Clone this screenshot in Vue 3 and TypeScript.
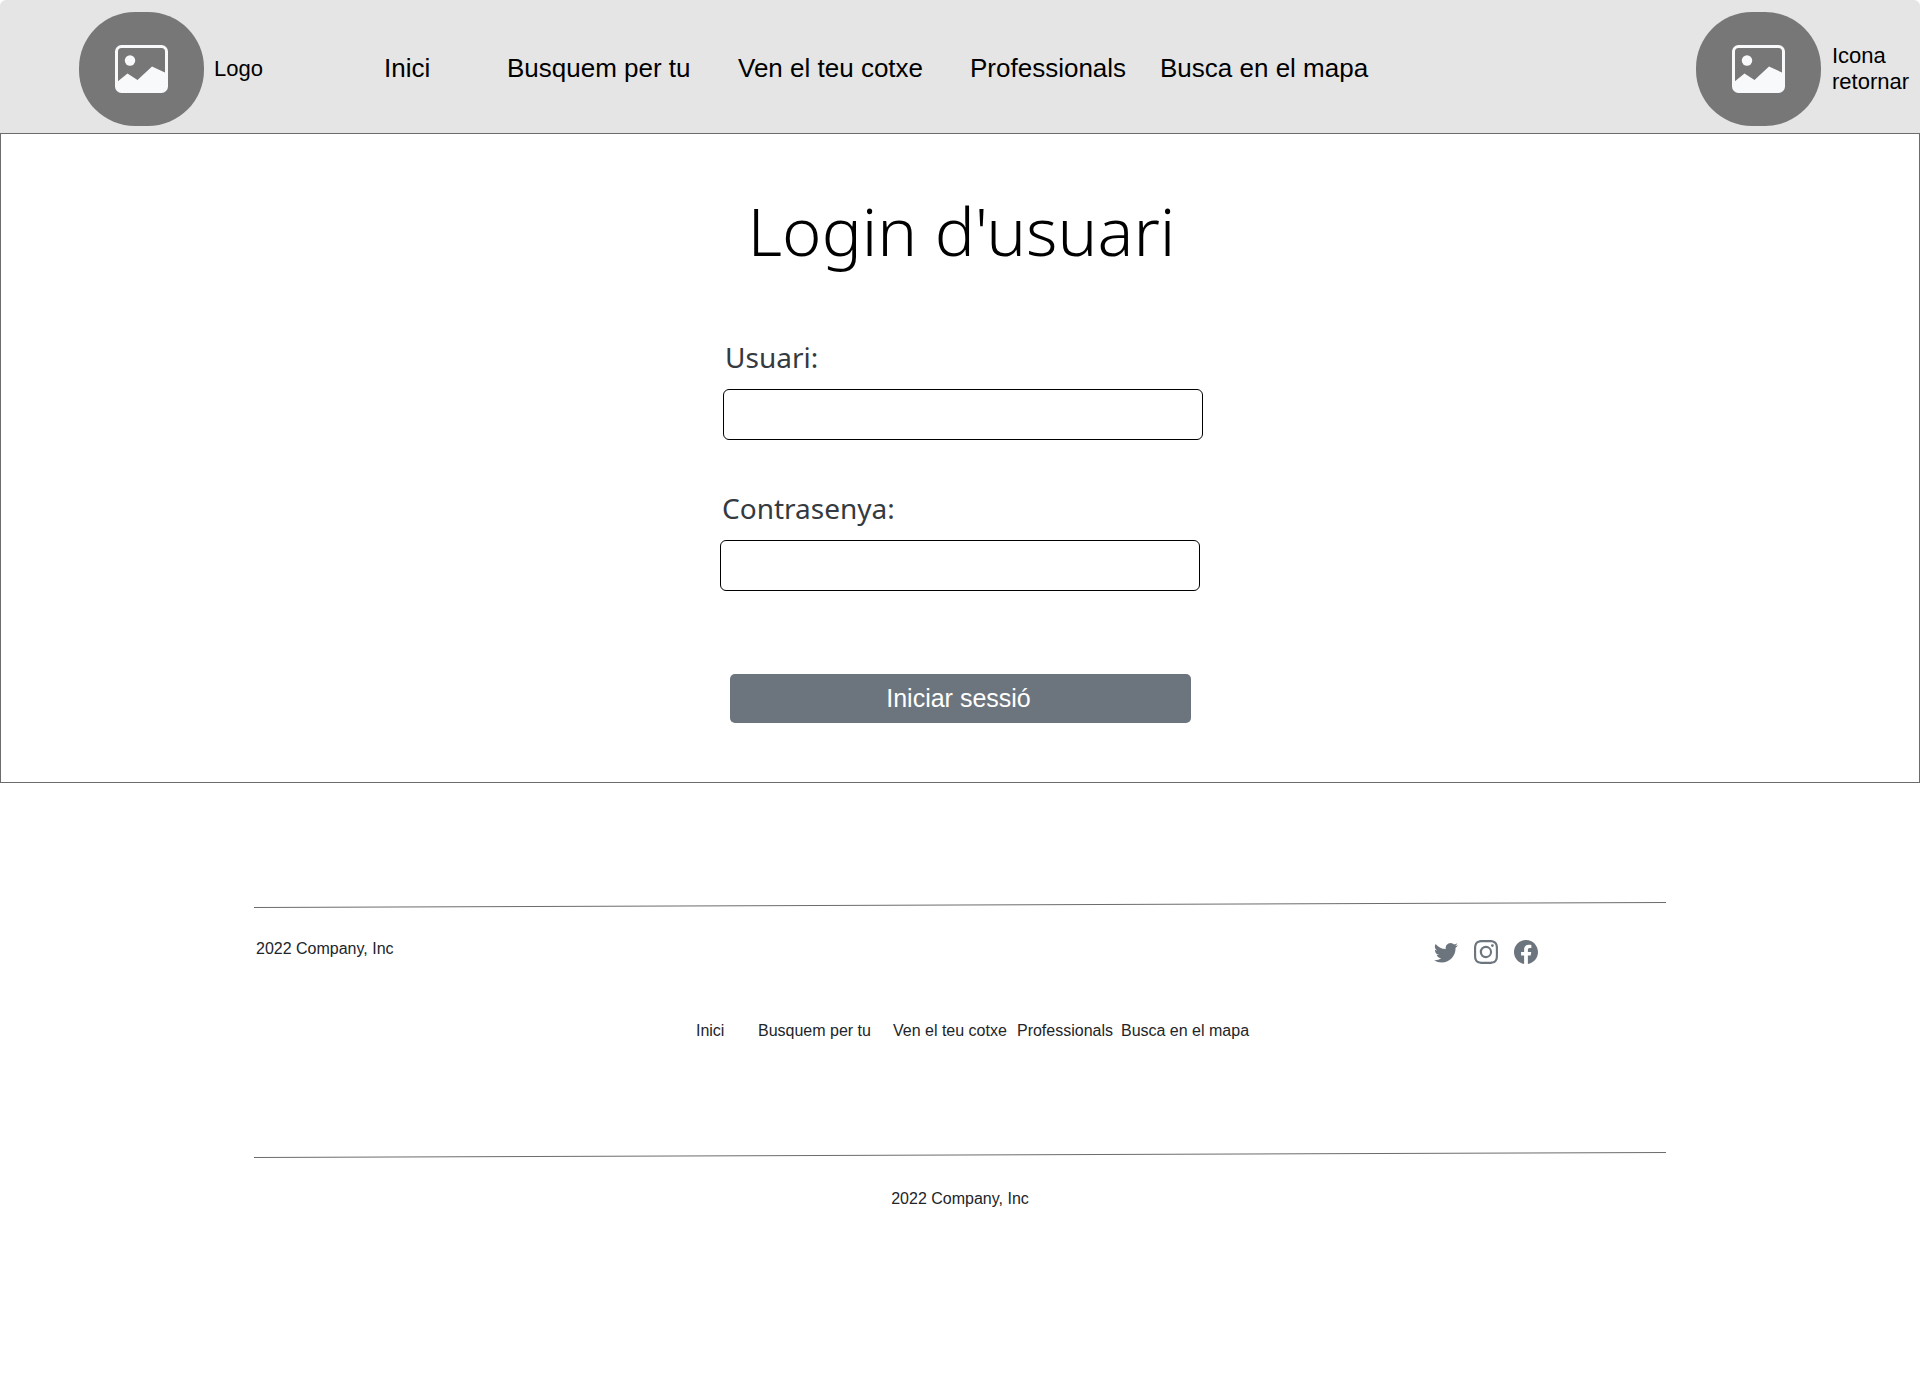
<script setup lang="ts">
import { ref } from 'vue'

const sections: string[] = [
  'Inici',
  'Busquem per tu',
  'Ven el teu cotxe',
  'Professionals',
  'Busca en el mapa',
]

const user = ref('')
const password = ref('')
</script>

<template>
  <div class="page">
    <header class="topbar">
      <a class="brand" href="#">
        <span class="badge">
          <svg viewBox="0 0 53 48" aria-hidden="true">
            <rect x="1.500" y="1.500" width="50" height="45" rx="5" fill="none" stroke="#f8f9fa" stroke-width="3" />
            <circle cx="15" cy="15.500" r="5.200" fill="#f8f9fa" />
            <path d="M2 37 12.500 28.500 22.500 35 37 21.500 51 28V42a5 5 0 0 1-5 5H7a5 5 0 0 1-5-5Z" fill="#f8f9fa" />
          </svg>
        </span>
        <span>Logo</span>
      </a>
      <nav class="main-nav" aria-label="Principal">
        <a v-for="s in sections" :key="s" href="#">{{ s }}</a>
      </nav>
      <a class="brand back" href="#">
        <span class="badge">
          <svg viewBox="0 0 53 48" aria-hidden="true">
            <rect x="1.500" y="1.500" width="50" height="45" rx="5" fill="none" stroke="#f8f9fa" stroke-width="3" />
            <circle cx="15" cy="15.500" r="5.200" fill="#f8f9fa" />
            <path d="M2 37 12.500 28.500 22.500 35 37 21.500 51 28V42a5 5 0 0 1-5 5H7a5 5 0 0 1-5-5Z" fill="#f8f9fa" />
          </svg>
        </span>
        <span class="back-text">Icona retornar</span>
      </a>
    </header>

    <main class="panel">
      <h1>Login d'usuari</h1>
      <form class="login" @submit.prevent>
        <div class="field field-user">
          <label for="user">Usuari:</label>
          <input id="user" v-model="user" type="text" autocomplete="username" />
        </div>
        <div class="field">
          <label for="password">Contrasenya:</label>
          <input id="password" v-model="password" type="password" autocomplete="current-password" />
        </div>
        <button type="submit">Iniciar sessió</button>
      </form>
    </main>

    <footer class="footer">
      <svg class="rule" viewBox="0 0 1412 6" preserveAspectRatio="none" aria-hidden="true">
        <path d="M0 5.500 1412 .5" stroke="#6c6c6c" fill="none" />
      </svg>
      <div class="footer-top">
        <span>2022 Company, Inc</span>
        <div class="social">
          <a href="#" aria-label="Twitter">
            <svg viewBox="0 0 16 16"><path d="M5.026 15c6.038 0 9.341-5.003 9.341-9.334 0-.14 0-.282-.006-.422A6.685 6.685 0 0 0 16 3.542a6.658 6.658 0 0 1-1.889.518 3.301 3.301 0 0 0 1.447-1.817 6.533 6.533 0 0 1-2.087.793A3.286 3.286 0 0 0 7.875 6.030a9.325 9.325 0 0 1-6.767-3.429 3.289 3.289 0 0 0 1.018 4.382A3.323 3.323 0 0 1 .64 6.575v.045a3.288 3.288 0 0 0 2.632 3.218 3.203 3.203 0 0 1-.865.115 3.230 3.230 0 0 1-.614-.057 3.283 3.283 0 0 0 3.067 2.277A6.588 6.588 0 0 1 .78 13.580a6.320 6.320 0 0 1-.78-.045A9.344 9.344 0 0 0 5.026 15z" /></svg>
          </a>
          <a href="#" aria-label="Instagram">
            <svg viewBox="0 0 16 16"><path d="M8 0C5.829 0 5.556.01 4.703.048 3.850.088 3.269.222 2.760.42a3.917 3.917 0 0 0-1.417.923A3.927 3.927 0 0 0 .42 2.760C.222 3.268.087 3.850.048 4.700.01 5.555 0 5.827 0 8.001c0 2.172.01 2.444.048 3.297.04.852.174 1.433.372 1.942.205.526.478.972.923 1.417.444.445.89.719 1.416.923.51.198 1.090.333 1.942.372C5.555 15.990 5.827 16 8 16s2.444-.01 3.298-.048c.851-.04 1.434-.174 1.943-.372a3.916 3.916 0 0 0 1.416-.923c.445-.445.718-.891.923-1.417.197-.509.332-1.090.372-1.942C15.990 10.445 16 10.173 16 8s-.01-2.445-.048-3.299c-.04-.851-.175-1.433-.372-1.941a3.926 3.926 0 0 0-.923-1.417A3.911 3.911 0 0 0 13.240.42c-.51-.198-1.092-.333-1.943-.372C10.443.01 10.172 0 7.998 0h.003zm-.717 1.442h.718c2.136 0 2.389.007 3.232.046.78.035 1.204.166 1.486.275.373.145.64.319.92.599.28.28.453.546.598.92.11.281.24.705.275 1.485.039.843.047 1.096.047 3.231s-.008 2.389-.047 3.232c-.035.78-.166 1.203-.275 1.485a2.470 2.470 0 0 1-.599.919c-.28.28-.546.453-.92.598-.28.11-.704.24-1.485.276-.843.038-1.096.047-3.232.047s-2.390-.009-3.233-.047c-.78-.036-1.203-.166-1.485-.276a2.478 2.478 0 0 1-.92-.598 2.480 2.480 0 0 1-.6-.92c-.109-.281-.24-.705-.275-1.485-.038-.843-.046-1.096-.046-3.233 0-2.136.008-2.388.046-3.231.036-.78.166-1.204.276-1.486.145-.373.319-.64.599-.92.28-.28.546-.453.92-.598.282-.11.705-.24 1.485-.276.738-.034 1.024-.044 2.515-.045v.002zm4.988 1.328a.96.96 0 1 0 0 1.920.96.96 0 0 0 0-1.920zm-4.270 1.122a4.109 4.109 0 1 0 0 8.217 4.109 4.109 0 0 0 0-8.217zm0 1.441a2.667 2.667 0 1 1 0 5.334 2.667 2.667 0 0 1 0-5.334z" /></svg>
          </a>
          <a href="#" aria-label="Facebook">
            <svg viewBox="0 0 16 16"><path d="M16 8.049c0-4.446-3.582-8.050-8-8.050C3.580 0-.002 3.603-.002 8.050c0 4.017 2.926 7.347 6.750 7.951v-5.625h-2.030V8.050H6.750V6.275c0-2.017 1.195-3.131 3.022-3.131.876 0 1.791.157 1.791.157v1.980h-1.009c-.993 0-1.303.621-1.303 1.258v1.510h2.218l-.354 2.326H9.250V16c3.824-.604 6.750-3.934 6.750-7.951z" /></svg>
          </a>
        </div>
      </div>
      <nav class="footer-nav" aria-label="Peu de pàgina">
        <a v-for="s in sections" :key="s" href="#">{{ s }}</a>
      </nav>
      <svg class="rule" viewBox="0 0 1412 6" preserveAspectRatio="none" aria-hidden="true">
        <path d="M0 5.500 1412 .5" stroke="#6c6c6c" fill="none" />
      </svg>
      <p class="copyright">2022 Company, Inc</p>
    </footer>
  </div>
</template>

<style>
body {
  margin: 0;
  background: #fff;
}
</style>

<style scoped>
.page {
  font-family: "Liberation Sans", Arial, sans-serif;
  color: #212529;
}

a {
  color: inherit;
  text-decoration: none;
}

.topbar {
  display: flex;
  align-items: center;
  padding: 12px 7px 7px 79px;
  border-radius: 6px 6px 0 0;
  background: #e5e5e5;
  color: #000;
  white-space: nowrap;
}

.brand {
  display: flex;
  align-items: center;
  gap: 10px;
  width: 305px;
  font-size: 22px;
  line-height: 26px;
}

.badge {
  display: flex;
  flex: none;
  align-items: center;
  justify-content: center;
  width: 125px;
  height: 114px;
  border-radius: 56px;
  background: #777;
}

.badge svg {
  width: 53px;
  height: 48px;
}

.back {
  gap: 11px;
  width: auto;
  margin-left: auto;
}

.back-text {
  width: 81px;
  white-space: normal;
}

.main-nav {
  display: grid;
  grid-template-columns: 123px 231px 232px 190px auto;
  padding-bottom: 2px;
  font-size: 26px;
  line-height: 32px;
}

.panel {
  display: flex;
  flex-direction: column;
  align-items: center;
  padding: 48px 0 59px 3px;
  border: 1px solid #6c6c6c;
}

h1 {
  margin: 0;
  color: #000;
  font-family: "Segoe UI", "Noto Sans", "Open Sans", sans-serif;
  font-size: 67px;
  font-weight: 300;
  line-height: 96px;
}

.login {
  display: flex;
  flex-direction: column;
  align-items: flex-start;
  width: 483px;
  padding-top: 60px;
}

.field {
  display: flex;
  flex-direction: column;
  width: 480px;
}

.field-user {
  align-self: flex-end;
  margin-bottom: 49px;
}

label {
  padding: 0 2px 12px;
  color: #343a40;
  font-family: "Segoe UI", "Noto Sans", "Open Sans", sans-serif;
  font-size: 28px;
  font-weight: 400;
  line-height: 39px;
}

input {
  box-sizing: border-box;
  height: 51px;
  padding: 0 12px;
  border: 1px solid #000;
  border-radius: 6px;
  background: #fff;
  font: inherit;
  font-size: 24px;
}

button {
  width: 461px;
  height: 49px;
  margin: 83px 0 0 10px;
  padding: 0 4px 2px 0;
  border: 0;
  border-radius: 5px;
  background: #6c757d;
  color: #fff;
  font: 25px/46px "Liberation Sans", Arial, sans-serif;
}

.footer {
  display: flex;
  flex-direction: column;
  padding: 119px 254px 0;
  font-size: 16px;
  line-height: 20px;
}

.rule {
  display: block;
  width: 100%;
  height: 6px;
}

.footer-top {
  display: flex;
  justify-content: space-between;
  padding: 31px 128px 0 2px;
}

.social {
  display: flex;
  gap: 16px;
  padding-top: 1px;
}

.social svg {
  display: block;
  width: 24px;
  height: 24px;
  fill: #6c757d;
}

.footer-nav {
  display: grid;
  grid-template-columns: 62px 135px 124px 104px auto;
  justify-content: center;
  padding: 57px 0 111px 25px;
}

.copyright {
  margin: 0;
  padding: 31px 0 48px;
  text-align: center;
}
</style>
